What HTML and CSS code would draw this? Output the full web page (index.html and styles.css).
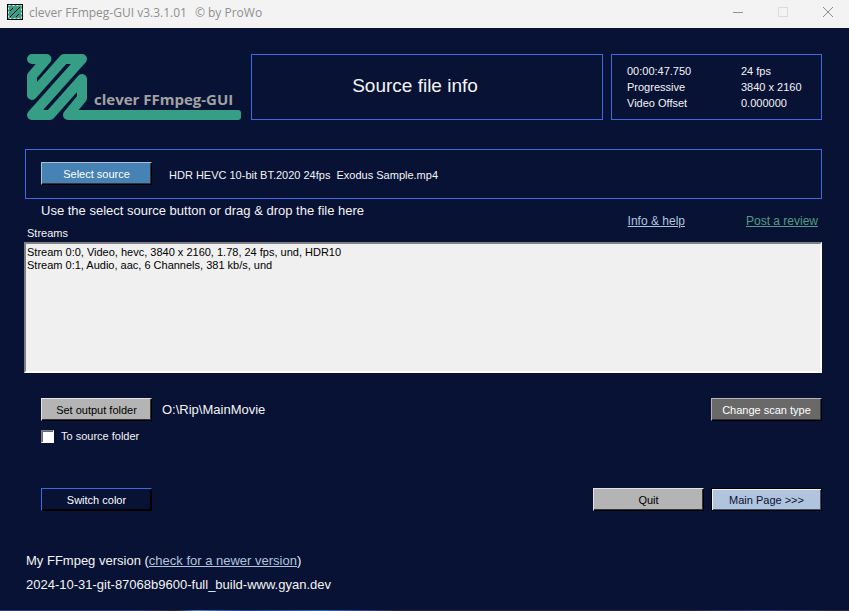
FILE: index.html
```html
<!DOCTYPE html>
<html lang="en">
<head>
<meta charset="utf-8">
<title>clever FFmpeg-GUI v3.3.1.01 © by ProWo</title>
<link rel="stylesheet" href="styles.css">
</head>
<body>
<header class="titlebar">
  <svg class="app-icon" width="16" height="16" viewBox="0 0 16 16" aria-hidden="true">
    <rect width="16" height="16" fill="#000"/>
    <rect x="1" y="1" width="14" height="14" fill="#359e84"/>
    <rect x="1.5" y="1.5" width="13" height="13" fill="none" stroke="#d9efea" stroke-dasharray="2 2"/>
    <path d="M3 7L6 4M3 13L13 3M9 13L12 10" stroke="#000" fill="none"/>
  </svg>
  <h1 class="window-title"><span>clever FFmpeg-GUI v3.3.1.01</span><span>© by ProWo</span></h1>
  <div class="window-controls">
    <button type="button" aria-label="Minimize"><svg width="10" height="10"><path d="M0 5.5H10" stroke="#929292"/></svg></button>
    <button type="button" aria-label="Maximize" disabled><svg width="10" height="10"><rect x=".5" y=".5" width="9" height="9" fill="none" stroke="#dcdcdc"/></svg></button>
    <button type="button" aria-label="Close"><svg width="10" height="10"><path d="M0 0L10 10M10 0L0 10" stroke="#8c8c8c"/></svg></button>
  </div>
</header>
<main class="content">
  <div class="top">
    <div class="logo">
      <svg class="mark" width="214" height="66" viewBox="0 0 214 66" aria-hidden="true">
        <path d="M5 5H19.500L5 22V41L37 5H55L5 61H23L55 25V44L41 61H60" fill="none" stroke="#359e84" stroke-width="10" stroke-linecap="round" stroke-linejoin="round"/>
        <rect x="50" y="56" width="164" height="10" rx="3" fill="#359e84"/>
      </svg>
      <span class="logo-text">clever FFmpeg-GUI</span>
    </div>
    <h2 class="frame heading">Source file info</h2>
    <div class="frame facts">
      <span>00:00:47.750</span><span>24 fps</span>
      <span>Progressive</span><span>3840 x 2160</span>
      <span>Video Offset</span><span>0.000000</span>
    </div>
  </div>
  <section class="frame source">
    <button type="button" class="btn blue">Select source</button>
    <span class="filename">HDR HEVC 10-bit BT.2020 24fps&nbsp; Exodus Sample.mp4</span>
  </section>
  <div class="hints">
    <div class="hint-text">
      <p class="large hint">Use the select source button or drag &amp; drop the file here</p>
      <h3 class="label" id="streams-label">Streams</h3>
    </div>
    <nav class="links">
      <a href="#help">Info &amp; help</a>
      <a href="#review" class="review">Post a review</a>
    </nav>
  </div>
  <ul class="streams" aria-labelledby="streams-label">
    <li>Stream 0:0, Video, hevc, 3840 x 2160, 1.78, 24 fps, und, HDR10</li>
    <li>Stream 0:1, Audio, aac, 6 Channels, 381 kb/s, und</li>
  </ul>
  <div class="row output">
    <button type="button" class="btn silver">Set output folder</button>
    <span class="large path">O:\Rip\MainMovie</span>
    <button type="button" class="btn gray push">Change scan type</button>
  </div>
  <label class="check"><input type="checkbox"> To source folder</label>
  <div class="row actions">
    <button type="button" class="btn navy">Switch color</button>
    <button type="button" class="btn silver push">Quit</button>
    <button type="button" class="btn light">Main Page &gt;&gt;&gt;</button>
  </div>
  <footer class="version">
    <p>My FFmpeg version (<a href="#update">check for a newer version</a>)</p>
    <p>2024-10-31-git-87068b9600-full_build-www.gyan.dev</p>
  </footer>
</main>
<div class="edge"></div>
</body>
</html>
```
FILE: styles.css
```css
* { box-sizing: border-box; }
body {
  margin: 0;
  min-height: 100vh;
  display: flex;
  flex-direction: column;
  background: #081234;
  color: #f4f4f4;
  font: 11px/16px "Liberation Sans", Arial, sans-serif;
}
h1, h2, h3, p, ul { margin: 0; padding: 0; font-weight: normal; }
a { color: #b0c4de; }
button { font: inherit; }
svg { display: block; }

.titlebar {
  display: flex;
  align-items: center;
  height: 28px;
  padding: 0 16px 4px 7px;
  background: #f3f3f3;
  color: #8f8f8f;
}
.window-title {
  display: flex;
  gap: 8px;
  margin-left: 6px;
  padding-top: 2px;
  font: 12px/16px "Open Sans", "Noto Sans", sans-serif;
}
.window-controls { display: flex; gap: 35px; margin-left: auto; }
.window-controls button { padding: 0; border: 0; background: none; }

.content { flex: 1; padding: 26px 27px 0 25px; }
.frame { border: 1px solid #4169e1; }
.top {
  display: grid;
  grid-template-columns: 218px 352fr 211fr;
  column-gap: 8px;
  height: 66px;
}
.logo { position: relative; padding-left: 2px; }
.logo-text {
  position: absolute;
  left: 69px;
  top: 34px;
  color: #a0a3a3;
  font: bold 15px/22px "Open Sans", "Noto Sans", sans-serif;
  white-space: nowrap;
}
.heading {
  display: flex;
  align-items: center;
  justify-content: center;
  padding: 0 24px 2px 0;
  font-size: 19px;
  line-height: 24px;
}
.facts {
  display: grid;
  grid-template-columns: 114px 1fr;
  align-content: start;
  padding: 8px 0 0 15px;
}
.source {
  display: flex;
  align-items: center;
  gap: 17px;
  height: 50px;
  margin-top: 29px;
  padding: 0 15px 2px;
}
.filename { padding-top: 3px; }
.btn {
  width: 111px;
  height: 23px;
  padding: 1px 0 0;
  border: 1px solid;
  box-shadow: inset -1px -1px #30343a;
}
.blue { background: #4682b4; border-color: #a3c1d9 #000 #000 #a3c1d9; color: #fff; }
.silver { background: #b4b4b4; border-color: #e4e4e4 #000 #000 #e4e4e4; color: #000; }
.gray { background: #696969; border-color: #b4b4b4 #000 #000 #b4b4b4; color: #fff; }
.navy { background: #081234; border-color: #4169e1 #000 #000 #4169e1; color: #fff; box-shadow: inset -1px -1px #000; }
.light { background: #b0c4de; border-color: #000; color: #081234; box-shadow: inset 1px 1px #eef3fa, inset -1px -1px #32506c; }
.push { margin-left: auto; }
.large { font-size: 13px; }

.hints { display: flex; justify-content: space-between; height: 43px; padding-top: 4px; }
.hint { padding-left: 16px; }
.label { margin-top: 6px; padding-left: 2px; font-size: 11px; }
.links { display: flex; gap: 61px; padding: 10px 4px 0 0; font-size: 12px; }
.review { color: #529b83; }
.streams {
  height: 131px;
  margin-left: -1px;
  padding: 2px 1px;
  border: 2px solid;
  border-color: #808080 #fff #fff #808080;
  background: #f0f0f0;
  color: #000;
  line-height: 13px;
  list-style: none;
}
.row { display: flex; align-items: center; padding-left: 16px; }
.output { margin-top: 25px; }
.path { margin-left: 10px; }
.check { display: flex; align-items: center; gap: 7px; width: max-content; margin-top: 7px; padding-left: 16px; }
.check input {
  appearance: none;
  width: 13px;
  height: 13px;
  margin: 0;
  border: 1px solid;
  border-color: #808080 #fff #fff #808080;
  box-shadow: inset 1px 1px #696969;
  background: #fff;
}
.actions { gap: 7px; margin-top: 44px; }
.version { margin-top: 38px; padding-left: 1px; font-size: 13px; line-height: 24px; }
.edge { height: 1px; background: linear-gradient(90deg, #303878 16%, #28283c 21%, #3f83b5 23%, #1d4598 29%, #2a70b8 38%, #303878 44%, #28283c 47%, #28283c 80%, #303878 90%, #28283c); }
```
